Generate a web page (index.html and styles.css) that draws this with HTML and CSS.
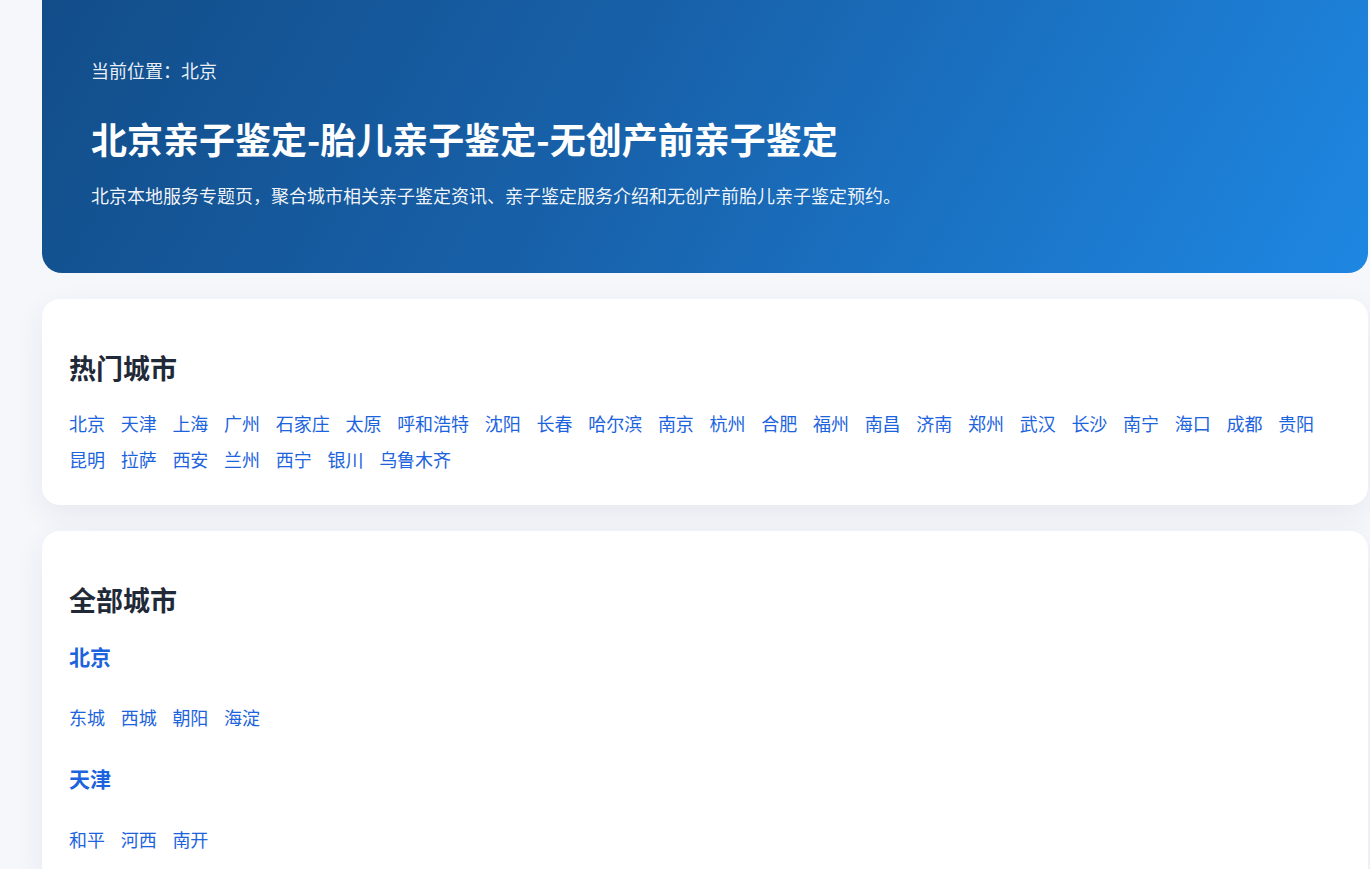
FILE: index.html
```html
<!DOCTYPE html>
<html lang="zh-CN">
<head>
    <meta charset="UTF-8">
    <meta name="viewport" content="width=device-width, initial-scale=1.0">
    <title>北京亲子鉴定-胎儿亲子鉴定-无创产前亲子鉴定</title>
    <link rel="stylesheet" href="styles.css">
</head>
<body>

    <div class="pagina">

        <div class="cabecera">
            <p class="ubicacion">当前位置：北京</p>
            <h1 class="titulo">北京亲子鉴定-胎儿亲子鉴定-无创产前亲子鉴定</h1>
            <p class="descripcion">北京本地服务专题页，聚合城市相关亲子鉴定资讯、亲子鉴定服务介绍和无创产前胎儿亲子鉴定预约。</p>
        </div>

        <div class="tarjeta">
            <h2 class="tarjeta-titulo">热门城市</h2>
            <div class="enlaces">
                <a href="#">北京</a>
                <a href="#">天津</a>
                <a href="#">上海</a>
                <a href="#">广州</a>
                <a href="#">石家庄</a>
                <a href="#">太原</a>
                <a href="#">呼和浩特</a>
                <a href="#">沈阳</a>
                <a href="#">长春</a>
                <a href="#">哈尔滨</a>
                <a href="#">南京</a>
                <a href="#">杭州</a>
                <a href="#">合肥</a>
                <a href="#">福州</a>
                <a href="#">南昌</a>
                <a href="#">济南</a>
                <a href="#">郑州</a>
                <a href="#">武汉</a>
                <a href="#">长沙</a>
                <a href="#">南宁</a>
                <a href="#">海口</a>
                <a href="#">成都</a>
                <a href="#">贵阳</a>
                <a href="#">昆明</a>
                <a href="#">拉萨</a>
                <a href="#">西安</a>
                <a href="#">兰州</a>
                <a href="#">西宁</a>
                <a href="#">银川</a>
                <a href="#">乌鲁木齐</a>
            </div>
        </div>

        <div class="tarjeta">
            <h2 class="tarjeta-titulo">全部城市</h2>

            <div class="ciudad">
                <h3 class="ciudad-nombre"><a href="#">北京</a></h3>
                <div class="enlaces">
                    <a href="#">东城</a>
                    <a href="#">西城</a>
                    <a href="#">朝阳</a>
                    <a href="#">海淀</a>
                </div>
            </div>

            <div class="ciudad">
                <h3 class="ciudad-nombre"><a href="#">天津</a></h3>
                <div class="enlaces">
                    <a href="#">和平</a>
                    <a href="#">河西</a>
                    <a href="#">南开</a>
                </div>
            </div>
        </div>

    </div>

</body>
</html>
```

FILE: styles.css
```css
*{
    box-sizing: border-box;
    margin: 0;
    padding: 0;
}

body{
    background-color: #f6f7fb;
    font-family: "Noto Sans CJK SC", "Noto Sans", "Liberation Sans", sans-serif;
    color: #1f2937;
    overflow: hidden;
}

a{
    color: #1c64dd;
    text-decoration: none;
}

.pagina{
    margin: 0 2px 40px 42px;
    display: flex;
    flex-direction: column;
    gap: 26px;
}

/* cabecera azul */
.cabecera{
    background: linear-gradient(120deg, #124d89 0%, #1862ab 45%, #1e87e2 100%);
    border-radius: 0 0 20px 20px;
    padding: 56px 49px 64px;
    color: #fff;
}

.ubicacion{
    font-size: 18px;
    line-height: 28px;
    color: rgba(255, 255, 255, 0.92);
}

.titulo{
    margin-top: 30px;
    font-size: 36px;
    line-height: 48px;
    font-weight: 700;
}

.descripcion{
    margin-top: 19px;
    font-size: 18px;
    line-height: 28px;
    color: rgba(255, 255, 255, 0.95);
}

/* tarjetas blancas */
.tarjeta{
    background-color: #fff;
    border-radius: 18px;
    padding: 28px 28px 28px 27px;
    box-shadow: 0 10px 30px rgba(30, 41, 80, 0.07);
}

.tarjeta-titulo{
    margin: 22px 0 18px;
    font-size: 27px;
    line-height: 38px;
    font-weight: 700;
    color: #1f2937;
}

.enlaces{
    display: flex;
    flex-wrap: wrap;
    column-gap: 15.7px;
    font-size: 18px;
    line-height: 36px;
}

.ciudad-nombre{
    margin-bottom: 28px;
    font-size: 21px;
    line-height: 30px;
    font-weight: 700;
}

.tarjeta-titulo + .ciudad{
    padding-top: 4px;
}

.ciudad + .ciudad{
    margin-top: 28px;
}
```
